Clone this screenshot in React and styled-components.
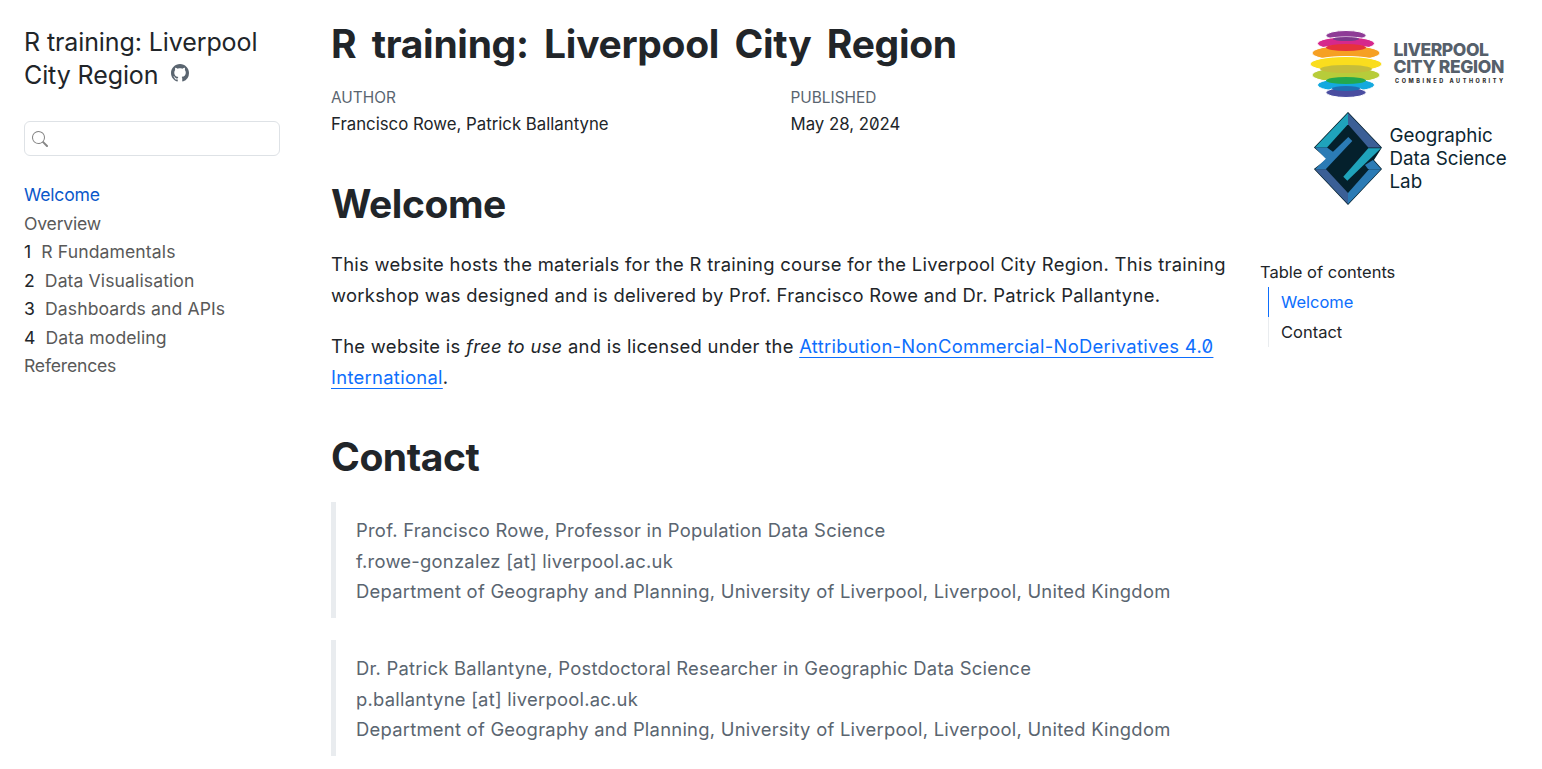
import React from 'react';
import styled, { createGlobalStyle } from 'styled-components';
import { BsGithub, BsSearch } from 'react-icons/bs';

const GlobalStyle = createGlobalStyle`
  html, body {
    margin: 0;
    padding: 0;
    background: #fff;
    color: #212529;
    font-family: Inter, "Noto Sans", sans-serif;
  }
`;

const Page = styled.div`
  display: grid;
  grid-template-columns: 331px 894px 1fr;
  width: 1542px;
  min-height: 769px;
`;

const Sidebar = styled.nav`
  padding: 26px 0 0 24px;
  width: 256px;
`;

const SiteTitle = styled.div`
  font-size: 25px;
  line-height: 33px;
  color: #212529;
  letter-spacing: -0.1px;
`;

const GithubLink = styled.a`
  display: inline-block;
  margin-left: 13px;
  color: #5a6570;
  font-size: 18px;
  line-height: 1;
  vertical-align: 2px;
`;

const SearchBox = styled.div`
  display: flex;
  align-items: center;
  box-sizing: border-box;
  height: 35px;
  margin-top: 29px;
  padding-left: 7px;
  border: 1px solid #dee2e6;
  border-radius: 6px;
  color: #868686;
  font-size: 16px;
`;

const NavList = styled.ul`
  list-style: none;
  margin: 25px 0 0;
  padding: 0;
`;

const NavItem = styled.li`
  height: 28.5px;
  line-height: 28.5px;
  font-size: 17.6px;
  letter-spacing: ${(props) => (props.$numbered ? '0.1px' : '-0.2px')};
  color: ${(props) => (props.$active ? '#0a58ca' : '#595959')};
`;

const NavNumber = styled.span`
  display: inline-block;
  margin-right: 10px;
  color: #212529;
`;

const Main = styled.main`
  padding-top: 17px;
`;

const Title = styled.h1`
  margin: 0;
  font-size: 39px;
  line-height: 54px;
  font-weight: 700;
  letter-spacing: -0.3px;
  word-spacing: 6.5px;
`;

const MetaRow = styled.div`
  display: grid;
  grid-template-columns: 459.5px 1fr;
  margin-top: 13px;
`;

const MetaLabel = styled.div`
  font-size: 15.4px;
  line-height: 27px;
  color: #5a6570;
`;

const MetaValue = styled.div`
  font-size: 16.8px;
  line-height: 26px;
  font-feature-settings: 'zero';
`;

const Heading = styled.h2`
  margin: ${(props) => props.$top} 0 0;
  font-size: 39px;
  line-height: 50px;
  font-weight: 700;
  letter-spacing: -0.45px;
`;

const Para = styled.p`
  margin: ${(props) => props.$top} 0 0;
  font-size: 18.4px;
  line-height: 30.5px;
  letter-spacing: 0.3px;
  white-space: nowrap;
  font-feature-settings: 'zero';
`;

const TextLink = styled.a`
  color: #0d6efd;
  text-decoration: underline;
  text-underline-offset: 4px;
  text-decoration-thickness: 1px;
`;

const Quote = styled.blockquote`
  margin: ${(props) => props.$top} 0 0;
  padding: 13px 0 11.5px 20px;
  border-left: 5px solid #e9ecef;
  color: #5a6570;
  font-size: 18.4px;
  line-height: 30.5px;
  letter-spacing: 0.25px;
`;

const Margin = styled.aside`
  padding: 30px 0 0 35px;
`;

const LogoStack = styled.div`
  display: flex;
  flex-direction: column;
  gap: 14px;
  margin-left: 50px;
`;

const TocTitle = styled.div`
  margin-top: 53px;
  font-size: 16.5px;
  line-height: 26px;
`;

const TocList = styled.ul`
  list-style: none;
  margin: 2px 0 0 8px;
  padding: 0;
  border-left: 1px solid #e9ecef;
`;

const TocItem = styled.li`
  margin-left: -1px;
  padding-left: 12px;
  height: 30px;
  line-height: 30px;
  font-size: 16.5px;
  border-left: 1px solid ${(props) => (props.$active ? '#0d6efd' : 'transparent')};
  color: ${(props) => (props.$active ? '#0d6efd' : '#212529')};
`;

const CityLogo = () => (
  <svg width="200" height="68" viewBox="0 0 200 68">
    <g stroke="#fff" strokeWidth="1">
      <ellipse cx="36" cy="5.5" rx="20" ry="5" fill="#8e3b96" />
      <ellipse cx="36" cy="13.5" rx="28.5" ry="6.5" fill="#d6288c" />
      <ellipse cx="36" cy="23" rx="34" ry="7.5" fill="#f6a023" />
      <ellipse cx="36" cy="34" rx="36" ry="7.5" fill="#fadd1e" />
      <ellipse cx="36" cy="45" rx="34" ry="7.5" fill="#b7cc3a" />
      <ellipse cx="36" cy="55" rx="28.5" ry="6.5" fill="#14a9df" />
      <ellipse cx="36" cy="62.5" rx="20" ry="5" fill="#4a4da0" />
    </g>
    <ellipse cx="36" cy="17.5" rx="20" ry="3.5" fill="#e6323c" />
    <ellipse cx="36" cy="39" rx="26" ry="4" fill="#c5bd3a" />
    <ellipse cx="36" cy="50.5" rx="20" ry="3.5" fill="#23a84e" />
    <ellipse cx="36" cy="58.5" rx="14" ry="2.5" fill="#1f6fb2" />
    <ellipse cx="36" cy="9" rx="13" ry="2" fill="#7b3a8c" />
    <g fontFamily="Inter, sans-serif" fontWeight="800" fill="#56606b">
      <text x="83.5" y="26" fontSize="17.5" letterSpacing="-0.45">LIVERPOOL</text>
      <text x="83.5" y="43" fontSize="17.5" letterSpacing="-0.35">CITY REGION</text>
      <text x="85" y="53" fontSize="5.5" letterSpacing="2.55" fill="#333">COMBINED AUTHORITY</text>
    </g>
  </svg>
);

const LabLogo = () => (
  <svg width="200" height="94" viewBox="0 0 200 94">
    <g transform="translate(5 1)">
      <polygon
        points="33,0 66,34.5 58,47 66,56 33,91 0,56 13,46 0,34.5"
        fill="#04202c"
        stroke="#04202c"
        strokeWidth="1.5"
      />
      <polygon points="33,0 0,34.5 12,34.5 33,11.3" fill="#1fa3bb" />
      <polygon points="33,0 66,34.5 53.3,34.5 33,11.3" fill="#3b5f96" />
      <polygon points="0,34.5 12,34.5 21,41 13,48" fill="#2b7bb5" />
      <polygon points="58,47 66,56 53,56 50,52" fill="#2b7bb5" />
      <polygon points="0,56.3 33,91 33,80 11,56.3" fill="#3b5f96" />
      <polygon points="66,56.3 33,91 33,80 54,56.3" fill="#2b7bb5" />
      <polygon points="33.3,24 37.3,28 10.7,56.3 0,56.3" fill="#2b7bb5" />
      <polygon points="53.3,35.3 66,35.3 32.3,67.7 28.3,63.7" fill="#1fa3bb" />
    </g>
    <g fontFamily="Inter, sans-serif" fontSize="18.8" fill="#0b2530">
      <text x="79.5" y="30">Geographic</text>
      <text x="79.5" y="53">Data Science</text>
      <text x="79.5" y="76">Lab</text>
    </g>
  </svg>
);

const chapters = [
  { label: 'Welcome', active: true },
  { label: 'Overview' },
  { label: 'R Fundamentals', number: 1 },
  { label: 'Data Visualisation', number: 2 },
  { label: 'Dashboards and APIs', number: 3 },
  { label: 'Data modeling', number: 4 },
  { label: 'References' },
];

const App = () => {
  return (
    <Page>
      <GlobalStyle />
      <Sidebar>
        <SiteTitle>
          R training: Liverpool City Region
          <GithubLink>
            <BsGithub />
          </GithubLink>
        </SiteTitle>
        <SearchBox>
          <BsSearch />
        </SearchBox>
        <NavList>
          {chapters.map((item) => (
            <NavItem key={item.label} $active={item.active} $numbered={!!item.number}>
              {item.number && <NavNumber>{item.number}</NavNumber>}
              {item.label}
            </NavItem>
          ))}
        </NavList>
      </Sidebar>

      <Main>
        <Title>R training: Liverpool City Region</Title>
        <MetaRow>
          <div>
            <MetaLabel>AUTHOR</MetaLabel>
            <MetaValue>Francisco Rowe, Patrick Ballantyne</MetaValue>
          </div>
          <div>
            <MetaLabel>PUBLISHED</MetaLabel>
            <MetaValue>May 28, 2024</MetaValue>
          </div>
        </MetaRow>
        <Heading $top="42px">Welcome</Heading>
        <Para $top="20px">
          This website hosts the materials for the R training course for the Liverpool City Region. This training
          <br />
          workshop was designed and is delivered by Prof. Francisco Rowe and Dr. Patrick Pallantyne.
        </Para>
        <Para $top="21px">
          The website is <em>free to use</em> and is licensed under the{' '}
          <TextLink>
            Attribution-NonCommercial-NoDerivatives 4.0
            <br />
            International
          </TextLink>
          .
        </Para>
        <Heading $top="40px">Contact</Heading>
        <Quote $top="20px">
          Prof. Francisco Rowe, Professor in Population Data Science
          <br />
          f.rowe-gonzalez [at] liverpool.ac.uk
          <br />
          Department of Geography and Planning, University of Liverpool, Liverpool, United Kingdom
        </Quote>
        <Quote $top="22px">
          Dr. Patrick Ballantyne, Postdoctoral Researcher in Geographic Data Science
          <br />
          p.ballantyne [at] liverpool.ac.uk
          <br />
          Department of Geography and Planning, University of Liverpool, Liverpool, United Kingdom
        </Quote>
      </Main>

      <Margin>
        <LogoStack>
          <CityLogo />
          <LabLogo />
        </LogoStack>
        <TocTitle>Table of contents</TocTitle>
        <TocList>
          <TocItem $active>Welcome</TocItem>
          <TocItem>Contact</TocItem>
        </TocList>
      </Margin>
    </Page>
  );
};

export default App;
